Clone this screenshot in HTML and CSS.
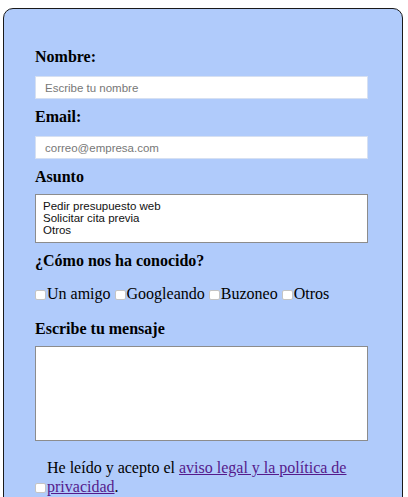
FILE: index.html
```html
<!DOCTYPE html>
<html lang="es">
<head>
<meta charset="utf-8">
<title>Contacto</title>
<link rel="stylesheet" href="styles.css">
</head>
<body>
<form class="card">
  <label class="lbl lbl-first" for="nombre">Nombre:</label>
  <input class="field" id="nombre" type="text" placeholder="Escribe tu nombre">
  <label class="lbl" for="email">Email:</label>
  <input class="field" id="email" type="email" placeholder="correo@empresa.com">
  <label class="lbl" for="asunto">Asunto</label>
  <div class="listbox" id="asunto">
    <div class="opt">Pedir presupuesto web</div>
    <div class="opt">Solicitar cita previa</div>
    <div class="opt">Otros</div>
  </div>
  <div class="lbl">¿Cómo nos ha conocido?</div>
  <div class="checks"><input type="checkbox" class="chk">Un amigo <input type="checkbox" class="chk">Googleando <input type="checkbox" class="chk">Buzoneo <input type="checkbox" class="chk">Otros</div>
  <label class="lbl lbl-msg" for="msg">Escribe tu mensaje</label>
  <textarea class="area" id="msg"></textarea>
  <p class="legal">He leído y acepto el <a href="#" class="link">aviso legal y la política de</a><br><input type="checkbox" class="chk"><a href="#" class="link">privacidad</a>.</p>
</form>
</body>
</html>
```
FILE: styles.css
```css
html, body {
  margin: 0;
  padding: 0;
  background: #ffffff;
}
body {
  padding: 8px 0 0 3px;
  font-family: "Liberation Serif", "Times New Roman", serif;
  font-size: 16px;
  color: #000;
}
.card {
  box-sizing: border-box;
  width: 400px;
  min-height: 520px;
  background: #b0cbfb;
  border: 1px solid #1a1a1a;
  border-radius: 10px 10px 0 0;
  padding: 39px 32px 0 31px;
  display: flex;
  flex-direction: column;
  align-items: flex-start;
}
.lbl {
  display: block;
  font-weight: bold;
  font-size: 16px;
  line-height: 18px;
  margin-top: 9px;
}
.lbl-first { margin-top: 0; }
.field {
  box-sizing: border-box;
  width: 333px;
  height: 23px;
  margin: 10px 0 0 0;
  padding: 0 9px;
  border: 1px solid #d6e0f2;
  background: #fff;
  font-family: "Liberation Sans", Arial, sans-serif;
  font-size: 11.5px;
  color: #222;
  outline: none;
}
.field::placeholder { color: #777; }
.listbox {
  box-sizing: border-box;
  width: 333px;
  height: 49px;
  margin-top: 8px;
  border: 1px solid #8c8c8c;
  background: #fff;
  padding: 5px 0 0 7px;
  font-family: "Liberation Sans", Arial, sans-serif;
  font-size: 11.5px;
  line-height: 12px;
  color: #111;
}
.checks {
  margin-top: 15px;
  line-height: 18px;
  font-size: 16px;
}
.chk {
  appearance: none;
  -webkit-appearance: none;
  box-sizing: border-box;
  width: 11px;
  height: 10px;
  margin: 0 1px 0 0;
  border: 1px solid #c4c4c4;
  border-radius: 2px;
  background: #fff;
  vertical-align: -1px;
}
.lbl-msg { margin-top: 17px; }
.area {
  box-sizing: border-box;
  width: 333px;
  height: 95px;
  margin-top: 8px;
  border: 1px solid #8c8c8c;
  background: #fff;
  resize: none;
  display: block;
}
.legal {
  margin: 17px 0 0 0;
  width: 333px;
  text-indent: 12px;
  line-height: 19px;
}
.link { color: #551a8b; }
```
